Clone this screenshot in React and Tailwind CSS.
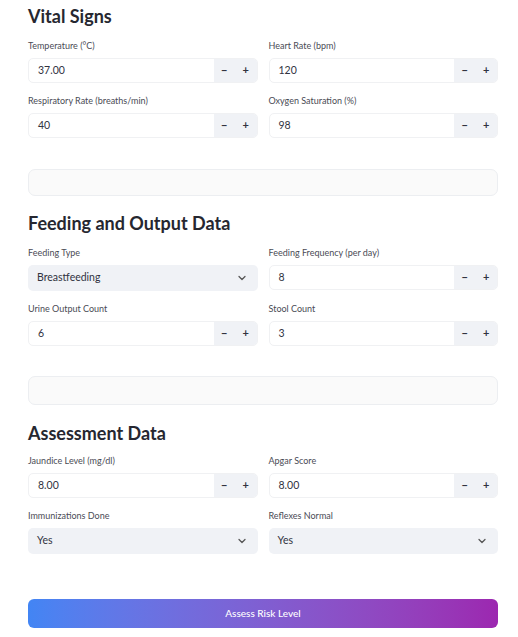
import { ChevronDown } from 'lucide-react'

function NumberField({ label, value }) {
  return (
    <div>
      <label className="block text-[9px] leading-[12px] text-[#4a4b55] mb-[6px]">{label}</label>
      <div className="flex h-[25px] rounded-[5px] border border-[#f0f1f3] overflow-hidden bg-white">
        <div className="flex-1 flex items-center pl-[9px] text-[10.5px] text-[#31333f]">{value}</div>
        <div className="flex w-[43px] bg-[#f0f2f6] text-[#31333f]">
          <span className="flex-1 flex items-center justify-center text-[11px] font-bold">−</span>
          <span className="flex-1 flex items-center justify-center text-[11px] font-bold">+</span>
        </div>
      </div>
    </div>
  )
}

function SelectField({ label, value }) {
  return (
    <div>
      <label className="block text-[9px] leading-[12px] text-[#4a4b55] mb-[6px]">{label}</label>
      <div className="flex h-[26px] items-center justify-between rounded-[5px] bg-[#f0f2f6] pl-[9px] pr-[10px] text-[10.5px] text-[#31333f]">
        <span>{value}</span>
        <ChevronDown size={12} strokeWidth={2.5} className="text-[#555]" />
      </div>
    </div>
  )
}

function Heading({ children, mb = 'mb-[12px]' }) {
  return <h2 className={`text-[18px] leading-[24px] font-bold text-[#262730] ${mb}`}>{children}</h2>
}

export default function App() {
  return (
    <div className="min-h-screen bg-white pl-7 pr-5 pt-[4px] pb-8" style={{ fontFamily: 'Lato, "Noto Sans", sans-serif' }}>
      <Heading>Vital Signs</Heading>
      <div className="grid grid-cols-2 gap-x-[11px] gap-y-[12px]">
        <NumberField label="Temperature (°C)" value="37.00" />
        <NumberField label="Heart Rate (bpm)" value="120" />
        <NumberField label="Respiratory Rate (breaths/min)" value="40" />
        <NumberField label="Oxygen Saturation (%)" value="98" />
      </div>
      <div className="h-[27px] mt-[31px] rounded-[7px] border border-[#eceef1] bg-[#fafafa]" />

      <div className="mt-[15px]">
        <Heading>Feeding and Output Data</Heading>
      </div>
      <div className="grid grid-cols-2 gap-x-[11px] gap-y-[12px]">
        <SelectField label="Feeding Type" value="Breastfeeding" />
        <NumberField label="Feeding Frequency (per day)" value="8" />
        <NumberField label="Urine Output Count" value="6" />
        <NumberField label="Stool Count" value="3" />
      </div>
      <div className="h-[29px] mt-[30px] rounded-[7px] border border-[#eceef1] bg-[#fafafa]" />

      <div className="mt-[16px]">
        <Heading mb="mb-[10px]">Assessment Data</Heading>
      </div>
      <div className="grid grid-cols-2 gap-x-[11px] gap-y-[12px]">
        <NumberField label="Jaundice Level (mg/dl)" value="8.00" />
        <NumberField label="Apgar Score" value="8.00" />
        <SelectField label="Immunizations Done" value="Yes" />
        <SelectField label="Reflexes Normal" value="Yes" />
      </div>

      <button className="mt-[45px] w-full h-[29px] rounded-[6px] bg-gradient-to-r from-[#4285f4] to-[#9c27b0] text-white text-[10px] font-medium">
        Assess Risk Level
      </button>
    </div>
  )
}
